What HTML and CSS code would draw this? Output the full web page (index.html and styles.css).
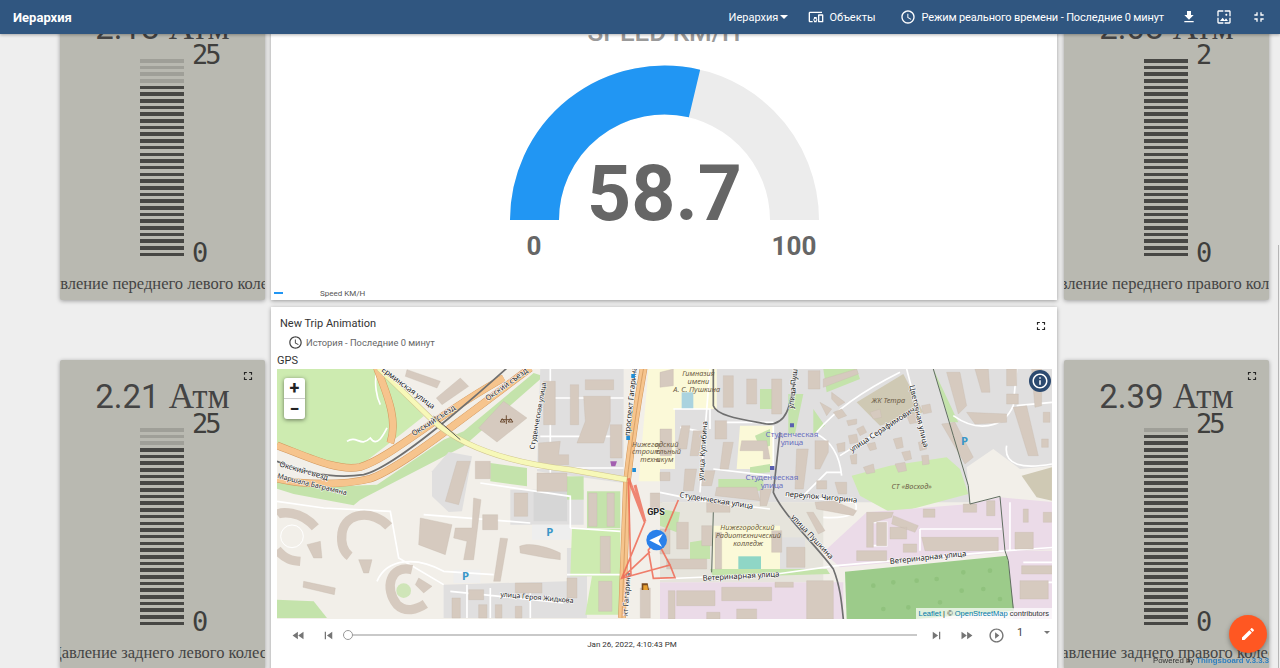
FILE: index.html
```html
<!DOCTYPE html>
<html lang="ru">
<head>
    <meta charset="UTF-8">
    <meta name="viewport" content="width=device-width, initial-scale=1.0">
    <title>Иерархия</title>
    <link rel="stylesheet" href="styles.css">
</head>
<body>
    <svg class="icon-defs" aria-hidden="true">
        <symbol id="i-clock" viewBox="0 0 24 24"><path d="M11.99 2C6.47 2 2 6.48 2 12s4.47 10 9.99 10C17.52 22 22 17.52 22 12S17.52 2 11.99 2zM12 20c-4.42 0-8-3.58-8-8s3.58-8 8-8 8 3.58 8 8-3.58 8-8 8zm.5-13H11v6l5.25 3.15.75-1.23-4.5-2.67z"/></symbol>
        <symbol id="i-fullscreen" viewBox="0 0 24 24"><path d="M7 14H5v5h5v-2H7v-3zm-2-4h2V7h3V5H5v5zm12 7h-3v2h5v-5h-2v3zM14 5v2h3v3h2V5h-5z"/></symbol>
    </svg>

    <header class="topbar">
        <div class="topbar-title">Иерархия</div>
        <div class="topbar-menu">Иерархия<span class="caret"></span></div>
        <div class="topbar-objects">
            <svg class="icon-16" viewBox="0 0 24 24"><path d="M3 6h18V4H3c-1.1 0-2 .9-2 2v12c0 1.1.9 2 2 2h4v-2H3V6zm10 6H9v1.78c-.61.55-1 1.33-1 2.22s.39 1.67 1 2.22V20h4v-1.78c.61-.55 1-1.34 1-2.22s-.39-1.67-1-2.22V12zm-2 5.5c-.83 0-1.5-.67-1.5-1.5s.67-1.5 1.5-1.5 1.5.67 1.5 1.5-.67 1.5-1.5 1.5zM22 8h-6c-.5 0-1 .5-1 1v10c0 .5.5 1 1 1h6c.5 0 1-.5 1-1V9c0-.5-.5-1-1-1zm-1 10h-4v-8h4v8z"/></svg>
            Объекты
        </div>
        <div class="topbar-time">
            <svg class="icon-16"><use href="#i-clock"/></svg>
            Режим реального времени - Последние 0 минут
        </div>
        <div class="topbar-btn"><svg class="icon-16" viewBox="0 0 24 24"><path d="M19 9h-4V3H9v6H5l7 7 7-7zM5 18v2h14v-2H5z"/></svg></div>
        <div class="topbar-btn"><svg class="icon-16" viewBox="0 0 24 24"><path d="M4 4h7V2H4c-1.1 0-2 .9-2 2v7h2V4zm6 9l-4 5h12l-3-4-2.03 2.71L10 13zm7-4.5c0-.83-.67-1.5-1.5-1.5S14 7.67 14 8.5s.67 1.5 1.5 1.5S17 9.33 17 8.5zM20 2h-7v2h7v7h2V4c0-1.1-.9-2-2-2zm0 18h-7v2h7c1.1 0 2-.9 2-2v-7h-2v7zM4 13H2v7c0 1.1.9 2 2 2h7v-2H4v-7z"/></svg></div>
        <div class="topbar-btn"><svg class="icon-16" viewBox="0 0 24 24"><path d="M5 16h3v3h2v-5H5v2zm3-8H5v2h5V5H8v3zm6 11h2v-3h3v-2h-5v5zm2-11V5h-2v5h5V8h-3z"/></svg></div>
    </header>

    <main class="dashboard">
        <!-- left column -->
        <div class="side-col">
            <section class="lcd">
                <svg class="lcd-expand"><use href="#i-fullscreen"/></svg>
                <div class="lcd-title">2.18 <span class="lcd-unit">Атм</span></div>
                <div class="lcd-body">
                    <div class="scale"><div class="scale-off" style="height: 26.7px"></div></div>
                    <div class="limits"><span>25</span><span>0</span></div>
                </div>
                <div class="lcd-label"><span>Давление переднего левого колеса</span></div>
            </section>
            <section class="lcd">
                <svg class="lcd-expand"><use href="#i-fullscreen"/></svg>
                <div class="lcd-title">2.21 <span class="lcd-unit">Атм</span></div>
                <div class="lcd-body">
                    <div class="scale"><div class="scale-off" style="height: 20px"></div></div>
                    <div class="limits"><span>25</span><span>0</span></div>
                </div>
                <div class="lcd-label"><span>Давление заднего левого колеса</span></div>
            </section>
        </div>

        <!-- middle column -->
        <div class="mid-col">
            <section class="card gauge-card">
                <div class="gauge-title">SPEED KM/H</div>
                <svg class="gauge" viewBox="0 0 786 224">
                    <path class="gauge-track" d="M263.5 174 A130 130 0 0 1 523.5 174"/>
                    <path class="gauge-value" d="M263.5 174 A130 130 0 0 1 423.5 47.5"/>
                    <text class="gauge-num" x="393.5" y="174">58.7</text>
                    <text class="gauge-limit" x="263" y="209">0</text>
                    <text class="gauge-limit" x="523" y="209">100</text>
                </svg>
                <div class="legend"><span class="legend-dash"></span>Speed KM/H</div>
            </section>

            <section class="card trip-card">
                <div class="trip-head">
                    <span>New Trip Animation</span>
                    <svg class="trip-expand"><use href="#i-fullscreen"/></svg>
                </div>
                <div class="trip-time"><svg class="trip-clock"><use href="#i-clock"/></svg>История - Последние 0 минут</div>
                <div class="trip-label">GPS</div>

                <div class="map">
                    <svg class="map-svg" viewBox="0 0 775 250" width="775" height="250">
                        <defs>
                            <path id="west-roads" d="M300 0C325 70 365 150 340 225M0 232C100 270 180 310 250 297C340 270 480 140 680 30M0 332C80 352 200 352 280 332C360 305 520 180 760 0M1100 0C1082 100 1060 250 1050 340L1035 750"/>
                            <path id="west-trunk" d="M305 0L470 160C560 240 700 285 880 305L1050 335"/>
                        </defs>
                        <rect width="775" height="250" fill="#f2efe9"/>

                        <!-- west half, 3 units to a pixel -->
                        <g transform="scale(.3333) translate(0 -3)">
                            <path class="m-grass" d="M0 0H310L440 145L370 200L260 285L150 295L0 228Z"/>
                            <path class="m-green" d="M0 322L130 357L300 350L500 215L560 190L770 15L800 25L560 235L250 395L230 412L50 378L0 362Z"/>
                            <path class="m-resi" d="M790 0H1040V345L780 310Z"/>
                            <path class="m-resi" d="M465 310L515 252L585 265L555 430L515 432L465 385Z"/>
                            <path class="m-resi" d="M700 365H920V470H700ZM870 540H930V750H500V650L870 640Z"/>
                            <path class="m-grass" d="M885 482H1030V740H925L945 625H880Z"/>
                            <path class="m-school" d="M1115 0H1170V340H1085Z"/>
                            <path class="m-green" d="M640 285L750 300V355L640 340Z"/>
                            <path class="m-green" d="M870 325H920V395H870Z"/>
                            <path class="m-green" d="M930 370H1030V480H930Z"/>
                            <path class="m-pave" d="M770 370H870V460H770Z"/>
                            <path class="m-park" d="M765 470H880V515H765ZM530 605H610V645H530Z"/>
                            <path class="m-green" d="M0 695L110 700L150 750H0Z"/>

                            <g class="m-roads">
                                <path d="M820 0V330M800 90H1040M790 205H1030M780 300H1040"/>
                                <path d="M610 345L880 385V480M440 440L700 460L760 465M880 480L1030 490M870 620H1030"/>
                                <path d="M0 400L140 420L340 430L365 570L500 650M300 640C330 570 420 565 500 610L650 620"/>
                                <path d="M520 670L860 705M570 650V750M640 660V750M760 670V750"/>
                                <path d="M300 0C290 50 300 90 310 110M210 220C240 200 250 240 280 210C300 240 320 200 330 180"/>
                            </g>

                            <path class="m-bld" d="M390 5L490 40L480 60L385 25ZM478 90L550 30L575 55L495 110ZM605 180L680 100L750 150L660 222ZM800 40H835V170H800ZM880 50H905V170H880ZM925 35H1010V65H925ZM920 85H1000V160L980 225H900L925 160Z"/>
                            <path class="m-bld" d="M785 225L850 220L845 260H875V290H785ZM1000 170H1035V270H1000ZM780 315H870V370H780ZM595 280H640V332H595ZM540 280L580 280L545 410L505 400Z"/>
                            <path class="m-bld" d="M430 450L525 470L505 560L425 530ZM535 480H585L590 390L612 395L590 575H560L570 520L530 510ZM617 440H662V485H617ZM670 510L692 512L670 640L650 640ZM728 535C760 520 820 540 850 555V575L810 570L730 555ZM712 375H752V445H712Z"/>
                            <path class="m-bld" d="M90 530L130 520L135 570L110 570ZM245 575H285L275 615H260ZM80 640L175 660L172 680L78 658ZM425 630L465 655L440 675L415 650ZM935 375H960V475H935ZM990 375H1012V475H990ZM970 505H1000V615H970ZM870 630H900V690H870Z"/>
                            <path class="m-bld" d="M575 665H620V695H575ZM715 645H795V675H715ZM965 640H1005V730H965ZM525 690H550V750H525ZM605 710H630V750H605ZM655 710H675V750H655ZM715 715H735V750H715ZM1090 660H1120V750H1090ZM1120 375H1155V430H1120Z"/>
                            <g class="m-arcs">
                                <path d="M115 478C70 425 10 432 0 440"/>
                                <path d="M335 475C290 425 205 430 195 495C190 535 205 555 218 565"/>
                                <path d="M405 605C340 590 320 660 360 710C385 735 420 725 445 708"/>
                                <path d="M0 545C25 575 45 578 70 580"/>
                            </g>
                            <circle cx="45" cy="505" r="34" fill="none" stroke="#fff" stroke-width="3"/>
                            <circle cx="380" cy="668" r="22" fill="#cfe5b8"/>

                            <!-- roads: casing first, fill on top -->
                            <use class="m-road-case" href="#west-roads"/>
                            <use class="m-road-fill" href="#west-roads"/>
                            <path class="m-rail" d="M0 280C100 322 180 332 260 320C340 300 500 170 690 0"/>
                            <use class="m-trunk-case" href="#west-trunk"/>
                            <use class="m-trunk" href="#west-trunk"/>
                            <path class="m-rail-thin" d="M470 145L550 215"/>
                            <path class="m-divider" d="M1100 0C1082 100 1060 250 1050 340L1035 750"/>

                            <g class="m-label">
                                <text transform="translate(312 8) rotate(37)">Ерминская улица</text>
                                <text transform="translate(410 205) rotate(-33)">Окский съезд</text>
                                <text transform="translate(632 100) rotate(-36)">Окский съезд</text>
                                <text transform="translate(6 295) rotate(16)">Окский съезд</text>
                                <text class="m-small" transform="translate(0 330) rotate(14)">Маршала Баграмяна</text>
                                <text class="m-small" transform="translate(772 245) rotate(-80)">Студенческая улица</text>
                                <text transform="translate(1058 205) rotate(-84)">проспект Гагарина</text>
                                <text transform="translate(1052 745) rotate(-86)">кт Гагарина</text>
                                <text class="m-small" transform="translate(670 686) rotate(5)">улица Героя Жидкова</text>
                            </g>
                            <g class="m-italic">
                                <text x="1065" y="236">Нижегород</text>
                                <text x="1065" y="258">строител</text>
                                <text x="1090" y="282">техни</text>
                            </g>
                            <text class="m-parking" x="808" y="505">P</text>
                            <text class="m-parking" x="555" y="637">P</text>
                            <path class="m-symbol" d="M672 155H705M688 142V168M676 152L670 162H684ZM700 152L694 162H708Z"/>
                            <path d="M1000 280H1020L1015 295H1003Z" fill="#a35fb0"/>
                            <path class="m-stop" d="M1063 18h11v12h-11zM1048 204h11v12h-11zM1066 300h11v12h-11z"/>
                        </g>

                        <!-- east half -->
                        <g transform="translate(383 0) scale(.3333)">
                            <path class="m-resi" d="M170 0H1185V400H0V120H170Z"/>
                            <path class="m-yard" d="M0 400H490V640H0Z"/>
                            <path class="m-land" d="M920 295L1000 240L1080 300L1176 290V400L930 400Z"/>
                            <path class="m-tan" d="M590 100L730 15L790 130L660 170Z"/>
                            <path class="m-tan" d="M1085 320L1176 295V395L1130 385Z"/>
                            <path class="m-grass" d="M575 320L690 290L860 265L900 300L925 375L700 435L600 380Z"/>
                            <path class="m-pink" d="M490 550L620 430L930 405L1020 385L1185 400V540L1050 548L540 595Z"/>
                            <path class="m-pink" d="M1040 545H1185V750H1060ZM0 640H550V750H0Z"/>
                            <path class="m-forest" d="M555 608L1042 560L1062 725L770 750H560Z"/>
                            <path class="m-trees" d="M640 650h.1M700 640h.1M770 635h.1M830 630h.1M910 610h.1M990 605h.1M670 720h.1M745 715h.1M840 700h.1M905 665h.1M970 660h.1M1020 690h.1"/>
                            <path class="m-school" d="M0 0H170V120H0ZM0 120H45V300H0ZM240 170H340V300H230ZM160 470H360V600H160Z"/>
                            <path class="m-resi" d="M360 505H435V600H360Z"/>
                            <path class="m-water" d="M65 70H100V120H65Z"/>
                            <path class="m-teal" d="M235 562H303V600H235Z"/>
                            <path class="m-green" d="M300 60H340V120H300ZM385 75H430L405 195H385ZM175 330H310V365H175ZM460 120L495 170L460 195ZM490 0H590L600 30L500 70ZM820 0L895 160L870 160ZM285 200L330 180V230L300 240ZM270 295L330 285V310L270 315ZM0 420L60 430L50 490L0 470ZM90 520L150 510L150 570H90ZM150 600H500L510 615L160 625Z"/>

                            <g class="m-roads">
                                <path d="M150 0L120 370M40 120H150V180M60 175L135 190M160 300L330 320M170 160H340M340 170V300"/>
                                <path d="M0 370L120 395L330 420M740 0L800 230M720 10C600 70 520 130 470 190M470 195C520 220 540 270 545 320M540 260L750 130M375 380L585 400C600 430 570 450 490 445"/>
                                <path d="M0 630L350 615L530 590L1040 545L1185 535M430 380L500 310L545 310M880 140C950 190 1030 180 1060 110L1070 0M1040 230C1030 290 1090 300 1176 285M1070 110L1176 100"/>
                                <path d="M780 480H1025M780 480V545M640 460H680V530H640M1050 400V545M1090 580H1185M1080 640H1185"/>
                            </g>

                            <path class="m-bld" d="M0 10L40 0V50L0 55ZM190 20H220V115H190ZM260 30H290V105H260ZM335 30H365V135H335ZM445 5H480V60H445ZM490 30L590 0L595 15L490 55ZM515 70L555 100L535 112L515 90ZM480 100L515 120L500 140ZM0 180H35V260H0ZM65 170H90L80 240H50ZM100 185H130L115 260H90ZM165 155H200V210H165ZM190 220H220L205 300H180Z"/>
                            <path class="m-bld" d="M245 215H320L330 270H310V245H240ZM465 215H505V250L480 300H465ZM410 240H445L430 360H405ZM0 310H30V335H0ZM75 300H110L100 365H70ZM130 305H165L155 350H125ZM300 360H335L320 410H300ZM170 355H290L300 395L165 380ZM140 395H210V430H140Z"/>
                            <path class="m-bld" d="M845 165L885 160L940 265L915 285ZM860 10H900L920 110L895 135ZM945 0H985L990 70L965 70ZM1040 0H1070V50H1040ZM1040 75H1075V105H1040ZM920 130L1040 135V160L945 165ZM1060 115L1100 110L1135 260H1105ZM1115 0H1145V110L1125 115Z"/>
                            <path class="m-bld" d="M1150 130H1170V160H1150ZM1145 210H1165V235H1145ZM520 130L545 120L560 140L535 150ZM560 155L590 150L590 165L565 170ZM590 180L610 170L620 190L600 200ZM630 130L660 120L665 145L640 150ZM740 140L770 130L775 160L750 165ZM785 110L810 105L815 130L790 135ZM700 210L725 205L730 235L710 240ZM725 250L750 245L755 270L735 275ZM775 220L795 215L800 240L780 245ZM785 260L805 258L808 285L788 288ZM705 285L735 280L740 305L715 310ZM610 295L640 285L645 310L620 315ZM620 225L645 220L650 240L630 245ZM565 200L590 195L595 220L570 225ZM530 225L555 220L555 245L535 250ZM570 260L590 255L590 285L575 285Z"/>
                            <path class="m-bld" d="M465 400L520 395L590 425L580 440L470 420ZM440 430L460 430L495 485L475 495ZM525 340H560L560 375L535 375ZM470 335H500V360H470ZM620 430H700L695 445L640 460V535H620ZM700 440L775 470L765 490L695 465ZM650 460H680V530H650ZM690 475H740V510H690ZM730 525H770V550H730ZM590 545H680V575H590ZM785 505H1015V545H795ZM910 405H950V430H910ZM980 395H1005V440H980ZM790 420H825V445H790Z"/>
                            <path class="m-bld" d="M380 535H435V595H380ZM440 635H520V750H440ZM50 665H165V710H50ZM185 655H335V695H185ZM345 640H400V655H345ZM165 490H185V600H165ZM335 485H365V550H335ZM50 460H85V540H50ZM0 480H30V555H0ZM125 470H155V530H125ZM20 570H140V600H20ZM1065 490H1120V540H1065ZM1085 590H1180V615H1085ZM1080 635H1165V690H1080ZM1090 420H1105V460H1090ZM1150 430H1175V460H1150ZM230 720H290V750H230ZM140 730H180V750H140ZM25 665H45V750H25Z"/>

                            <path class="m-rail" d="M160 0V110C170 140 240 150 320 165C380 170 390 120 410 0"/>
                            <path class="m-rail" d="M360 190L340 370C370 440 470 530 520 600C540 650 545 700 550 750"/>
                            <path class="m-fence" d="M820 0L880 200L925 350L930 405L1020 382L1035 545L1045 575L1060 720M155 610L160 430"/>

                            <g class="m-label">
                                <text transform="translate(375 382) rotate(5)">переулок Чигорина</text>
                                <text transform="translate(58 385) rotate(9)">Студенческая улица</text>
                                <text transform="translate(128 635) rotate(-3)">Ветеринарная улица</text>
                                <text transform="translate(690 585) rotate(-6)">Ветеринарная улица</text>
                                <text transform="translate(575 250) rotate(-33)">улица Серафимовича</text>
                                <text transform="translate(748 50) rotate(77)">Цветочная улица</text>
                                <text transform="translate(130 335) rotate(-86)">улица Кулибина</text>
                                <text transform="translate(400 120) rotate(-84)">улица Пушкина</text>
                                <text transform="translate(392 445) rotate(47)">улица Пушкина</text>
                            </g>
                            <g class="m-italic m-center">
                                <text x="115" y="22">Гимназия</text>
                                <text x="115" y="46">имени</text>
                                <text x="110" y="70">А. С. Пушкина</text>
                                <text x="685" y="102">ЖК Тетра</text>
                                <text x="755" y="360">СТ «Восход»</text>
                                <text x="262" y="484">Нижегородский</text>
                                <text x="265" y="508">Радиотехнический</text>
                                <text x="265" y="532">колледж</text>
                                <text x="20" y="234">одский</text>
                                <text x="25" y="256">ельный</text>
                                <text x="15" y="280">икум</text>
                            </g>
                            <g class="m-station">
                                <text x="396" y="205">Студенческая</text>
                                <text x="396" y="229">улица</text>
                                <text x="336" y="334">Студенческая</text>
                                <text x="336" y="358">улица</text>
                            </g>
                            <path class="m-stop2" d="M390 163h12v12h-12zM330 291h13v12h-13z"/>
                            <text class="m-parking" x="903" y="228">P</text>
                        </g>

                        <!-- track, drawn from the marker crop -->
                        <g transform="translate(283 111) scale(.3333)">
                            <path class="m-route-fat" d="M205 -5L255 125L225 15"/>
                            <path class="m-route" d="M255 125L185 295L330 255L345 293L280 295L265 210L290 180L330 255L275 270M185 295L270 215M315 155L355 60M205 5L213 285"/>
                            <path d="M245 310h18l4 20h-22z" fill="#7a4a1e"/>
                            <path d="M250 316h12l2 14h-14z" fill="#e8a030"/>
                            <text class="m-gps" x="288" y="105">GPS</text>
                            <circle cx="290" cy="180" r="31" fill="#2a80ea"/>
                            <path d="M268 181L308 162L296 182L306 200Z" fill="#fff"/>
                        </g>
                    </svg>

                    <div class="zoom-ctl"><span>+</span><span>−</span></div>
                    <div class="map-info"><svg viewBox="0 0 24 24"><path d="M11 17h2v-6h-2v6zm1-15C6.48 2 2 6.48 2 12s4.48 10 10 10 10-4.48 10-10S17.52 2 12 2zm0 18c-4.41 0-8-3.59-8-8s3.59-8 8-8 8 3.59 8 8-3.59 8-8 8zM11 9h2V7h-2v2z"/></svg></div>
                    <div class="attribution"><a>Leaflet</a> | © <a>OpenStreetMap</a> contributors</div>
                </div>

                <div class="player">
                    <div class="player-btn"><svg viewBox="0 0 24 24"><path d="M11 18V6l-8.5 6 8.5 6zm.5-6l8.5 6V6l-8.5 6z"/></svg></div>
                    <div class="player-btn"><svg viewBox="0 0 24 24"><path d="M6 6h2v12H6zm3.5 6l8.5 6V6z"/></svg></div>
                    <div class="slider">
                        <div class="slider-track"><span class="slider-thumb"></span></div>
                        <div class="slider-date">Jan 26, 2022, 4:10:43 PM</div>
                    </div>
                    <div class="player-btn"><svg viewBox="0 0 24 24"><path d="M6 18l8.5-6L6 6v12zM16 6v12h2V6h-2z"/></svg></div>
                    <div class="player-btn"><svg viewBox="0 0 24 24"><path d="M4 18l8.5-6L4 6v12zm9-12v12l8.5-6L13 6z"/></svg></div>
                    <div class="player-btn player-play"><svg viewBox="0 0 24 24"><path d="M10 16.5l6-4.5-6-4.5v9zM12 2C6.48 2 2 6.48 2 12s4.48 10 10 10 10-4.48 10-10S17.52 2 12 2zm0 18c-4.41 0-8-3.59-8-8s3.59-8 8-8 8 3.59 8 8-3.59 8-8 8z"/></svg></div>
                    <div class="speed"><span>1</span><span class="speed-arrow"></span></div>
                </div>
            </section>
        </div>

        <!-- right column -->
        <div class="side-col">
            <section class="lcd">
                <svg class="lcd-expand"><use href="#i-fullscreen"/></svg>
                <div class="lcd-title">2.08 <span class="lcd-unit">Атм</span></div>
                <div class="lcd-body">
                    <div class="scale"></div>
                    <div class="limits"><span>2</span><span>0</span></div>
                </div>
                <div class="lcd-label"><span>Давление переднего правого колеса</span></div>
            </section>
            <section class="lcd">
                <svg class="lcd-expand"><use href="#i-fullscreen"/></svg>
                <div class="lcd-title">2.39 <span class="lcd-unit">Атм</span></div>
                <div class="lcd-body">
                    <div class="scale"><div class="scale-off" style="height: 6.7px"></div></div>
                    <div class="limits"><span>25</span><span>0</span></div>
                </div>
                <div class="lcd-label"><span>Давление заднего правого колеса</span></div>
            </section>
        </div>
    </main>

    <div class="fab"><svg viewBox="0 0 24 24"><path d="M3 17.25V21h3.75L17.81 9.94l-3.75-3.75L3 17.25zM20.71 7.04c.39-.39.39-1.02 0-1.41l-2.34-2.34c-.39-.39-1.02-.39-1.41 0l-1.83 1.83 3.75 3.75 1.83-1.83z"/></svg></div>
    <div class="powered">Powered by <a>Thingsboard v.3.3.3</a></div>
    <div class="scroll-thumb"></div>
</body>
</html>
```

FILE: styles.css
```css
* {
    box-sizing: border-box;
}

html, body {
    margin: 0;
    height: 668px;
    overflow: hidden;
}

body {
    font-family: Roboto, "Noto Sans", sans-serif;
    background-color: #eeeeee;
    color: #333;
}

.icon-defs {
    display: none;
}

.icon-16 {
    width: 16px;
    height: 16px;
    fill: currentColor;
    flex: none;
}

/* top bar */
.topbar {
    position: relative;
    z-index: 2;
    display: flex;
    align-items: center;
    height: 34px;
    padding-right: 4px;
    background-color: #305680;
    color: #fff;
    font-size: 11px;
    box-shadow: 0 1px 3px rgba(0, 0, 0, 0.3);
}

.topbar-title {
    margin-left: 13px;
    margin-right: auto;
    font-size: 13px;
    font-weight: 700;
}

.caret {
    display: inline-block;
    margin-left: 2px;
    vertical-align: 2px;
    border-left: 4px solid transparent;
    border-right: 4px solid transparent;
    border-top: 4px solid #fff;
}

.topbar-objects, .topbar-time {
    display: flex;
    align-items: center;
    gap: 5px;
}

.topbar-objects {
    margin-left: 20px;
}

.topbar-time {
    margin-left: 25px;
    margin-right: 7px;
    letter-spacing: -0.14px;
}

.topbar-btn {
    display: flex;
    justify-content: center;
    width: 35px;
}

/* dashboard grid */
.dashboard {
    display: grid;
    grid-template-columns: 205px 787px 205px;
    column-gap: 6px;
    margin-top: -43px;
    padding-left: 60px;
}

.side-col {
    display: flex;
    flex-direction: column;
    gap: 60px;
}

.mid-col {
    display: flex;
    flex-direction: column;
    gap: 7px;
    margin-right: 1px;
}

.card {
    background: #fff;
    box-shadow: 0 1px 4px rgba(0, 0, 0, 0.35);
}

/* tyre pressure widgets */
.lcd {
    position: relative;
    height: 309px;
    padding-top: 17px;
    background-color: #b9b9b1;
    color: #444;
    border-radius: 2px;
    box-shadow: 0 1px 4px rgba(0, 0, 0, 0.35);
}

.lcd-expand {
    position: absolute;
    top: 9px;
    right: 10px;
    width: 14px;
    height: 14px;
    fill: #222;
}

.lcd-title {
    height: 40px;
    line-height: 40px;
    font-size: 33px;
    text-align: center;
    white-space: nowrap;
}

.lcd-unit {
    font-family: "Liberation Serif", serif;
    font-size: 35px;
    margin-left: 1px;
}

.lcd-body {
    display: flex;
    align-items: flex-start;
    height: 197px;
    margin-top: 11px;
    padding-left: 80px;
}

.scale {
    width: 44px;
    height: 197px;
    background: repeating-linear-gradient(#474744 0, #474744 3.6px, transparent 3.6px, transparent 6.68px);
}

.scale-off {
    background: repeating-linear-gradient(#9f9f98 0, #9f9f98 3.6px, #b9b9b1 3.6px, #b9b9b1 6.68px);
}

.limits {
    display: flex;
    flex-direction: column;
    justify-content: space-between;
    height: 222px;
    margin-top: -16px;
    margin-left: 8px;
    font-family: "DejaVu Sans Mono", monospace;
    font-size: 27px;
    line-height: 24px;
    letter-spacing: -3px;
    color: #3f3f3d;
}

.lcd-label {
    display: flex;
    justify-content: center;
    overflow: hidden;
    margin-top: 16px;
    height: 24px;
    line-height: 24px;
    font-family: "Liberation Serif", serif;
    font-size: 16.5px;
    white-space: nowrap;
}

.lcd-label span {
    flex: none;
}

/* speed gauge */
.gauge-card {
    display: flex;
    flex-direction: column;
    height: 309px;
    padding-top: 27px;
}

.gauge-title {
    height: 28px;
    line-height: 28px;
    font-size: 26px;
    font-weight: 500;
    color: #999;
    text-align: center;
}

.gauge {
    display: block;
    width: 786px;
    height: 224px;
}

.gauge-track, .gauge-value {
    fill: none;
    stroke-width: 49;
}

.gauge-track {
    stroke: #ececec;
}

.gauge-value {
    stroke: #2196f3;
}

.gauge-num {
    font-size: 77px;
    font-weight: 700;
    fill: #666;
    text-anchor: middle;
}

.gauge-limit {
    font-size: 26px;
    font-weight: 700;
    fill: #666;
    text-anchor: middle;
}

.legend {
    display: flex;
    align-items: center;
    margin-top: auto;
    height: 14px;
    padding-left: 3px;
    font-size: 8px;
    color: #555;
}

.legend-dash {
    width: 9px;
    height: 2px;
    margin-right: 37px;
    background-color: #2196f3;
}

/* trip animation */
.trip-card {
    padding-top: 9px;
    height: 380px;
}

.trip-head {
    display: flex;
    justify-content: space-between;
    align-items: center;
    height: 14px;
    padding-left: 9px;
    padding-right: 9px;
    font-size: 11px;
    color: #333;
}

.trip-expand {
    width: 14px;
    height: 14px;
    margin-top: 6px;
    fill: #222;
}

.trip-time {
    display: flex;
    align-items: center;
    gap: 3px;
    height: 14px;
    margin-top: 5px;
    padding-left: 17px;
    font-size: 9.3px;
    color: #666;
}

.trip-clock {
    width: 15px;
    height: 15px;
    fill: #444;
}

.trip-label {
    height: 14px;
    line-height: 14px;
    margin-top: 5px;
    padding-left: 6px;
    font-size: 11px;
}

.map {
    position: relative;
    width: 775px;
    height: 250px;
    margin-top: 1px;
    margin-left: 6px;
    overflow: hidden;
}

.map-svg {
    display: block;
}

.m-land { fill: #f2efe9; }
.m-yard { fill: #e6e4dc; }
.m-grass { fill: #cdebb0; }
.m-green { fill: #c4e3ab; }
.m-resi { fill: #e0dfdf; }
.m-pave { fill: #d6d6d6; }
.m-park { fill: #eeeeee; }
.m-school { fill: #fbf9d8; }
.m-tan { fill: #cfc9b4; }
.m-pink { fill: #ebdbe8; }
.m-forest { fill: #9ccb8a; }
.m-water { fill: #aad3df; }
.m-teal { fill: #8fd6c6; }
.m-bld { fill: #d6cabf; stroke: #c6b9ad; stroke-width: 1; }

.m-roads path, .m-arcs path, .m-road-case, .m-road-fill, .m-trunk, .m-trunk-case, .m-rail, .m-rail-thin, .m-divider, .m-fence, .m-route, .m-route-fat, .m-symbol, .m-trees {
    fill: none;
}

.m-roads path {
    stroke: #fff;
    stroke-width: 5;
}

.m-arcs path {
    stroke: #d6cabf;
    stroke-width: 28;
}

.m-road-case {
    stroke: #d2975c;
    stroke-width: 23;
}

.m-road-fill {
    stroke: #f6c48d;
    stroke-width: 20;
}

.m-trunk-case {
    stroke: #cfc48c;
    stroke-width: 17;
}

.m-trunk {
    stroke: #f7f8b8;
    stroke-width: 14;
}

.m-divider {
    stroke: #c98f55;
    stroke-width: 2;
}

.m-rail {
    stroke: #6f6f6f;
    stroke-width: 5;
}

.m-rail-thin {
    stroke: #555;
    stroke-width: 3;
}

.m-fence {
    stroke: #5f6d5f;
    stroke-width: 3;
}

.m-symbol {
    stroke: #6b4a30;
    stroke-width: 3;
}

.m-trees {
    stroke: #90c27d;
    stroke-width: 14;
    stroke-linecap: round;
}

.m-stop { fill: #1f8dd6; }
.m-stop2 { fill: #5a5fb0; }

.m-route {
    stroke: #ee6a55;
    stroke-width: 5;
    opacity: 0.85;
}

.m-route-fat {
    stroke: #ee6a55;
    stroke-width: 9;
    opacity: 0.8;
}

.m-label text {
    font-family: "Noto Sans", sans-serif;
    font-size: 23px;
    fill: #222;
    stroke: #fff;
    stroke-width: 3px;
    paint-order: stroke;
}

.m-label .m-small {
    font-size: 21px;
}

.m-italic text {
    font-family: "Noto Sans", sans-serif;
    font-style: italic;
    font-size: 22px;
    fill: #6b5b45;
}

.m-center text, .m-station text {
    text-anchor: middle;
}

.m-station text {
    font-family: "Noto Sans", sans-serif;
    font-size: 24px;
    fill: #6a6fc0;
}

.m-parking {
    font-family: "Noto Sans", sans-serif;
    font-size: 34px;
    font-weight: 700;
    fill: #3a96c8;
}

.m-gps {
    font-size: 27px;
    font-weight: 700;
    fill: #222;
    text-anchor: middle;
    stroke: #fff;
    stroke-width: 2px;
    paint-order: stroke;
}

.zoom-ctl {
    position: absolute;
    top: 9px;
    left: 7px;
    display: flex;
    flex-direction: column;
    width: 21px;
    background: #fff;
    border-radius: 3px;
    box-shadow: 0 1px 4px rgba(0, 0, 0, 0.5);
}

.zoom-ctl span {
    height: 20.5px;
    line-height: 20px;
    font-size: 18px;
    font-weight: 700;
    text-align: center;
    color: #222;
}

.zoom-ctl span:first-child {
    border-bottom: 1px solid #ccc;
}

.map-info {
    position: absolute;
    top: 1px;
    right: 1px;
    width: 22px;
    height: 22px;
    padding: 2px;
    border-radius: 50%;
    background-color: #2c4a70;
    fill: #fff;
}

.attribution {
    position: absolute;
    right: 0;
    bottom: 0;
    padding: 0 3px;
    height: 11px;
    line-height: 11px;
    background: rgba(255, 255, 255, 0.7);
    font-family: "Liberation Sans", sans-serif;
    font-size: 7.5px;
    color: #333;
}

.attribution a {
    color: #0078a8;
}

/* playback controls */
.player {
    display: flex;
    align-items: flex-start;
    padding-left: 12px;
    padding-right: 7px;
}

.player-btn {
    display: flex;
    justify-content: center;
    align-items: center;
    width: 30px;
    height: 32px;
    fill: #757575;
}

.player-btn svg {
    width: 15px;
    height: 15px;
}

.player-play svg {
    width: 17px;
    height: 17px;
}

.slider {
    flex: 1;
    padding-top: 15px;
}

.slider-track {
    position: relative;
    height: 2px;
    margin-right: 4px;
    background-color: #c9c9c9;
}

.slider-thumb {
    position: absolute;
    left: 0;
    top: -4px;
    width: 10px;
    height: 10px;
    border: 1px solid #999;
    border-radius: 50%;
    background: #fff;
}

.slider-date {
    margin-top: 3px;
    text-align: center;
    font-size: 8px;
    line-height: 12px;
    color: #333;
}

.speed {
    display: flex;
    justify-content: space-between;
    width: 33px;
    margin-left: 6px;
    padding-top: 7px;
    font-size: 11px;
    line-height: 14px;
    color: #444;
}

.speed-arrow {
    margin-top: 5px;
    border-left: 3px solid transparent;
    border-right: 3px solid transparent;
    border-top: 3px solid #777;
}

/* floating bits */
.fab {
    position: fixed;
    left: 1229px;
    top: 615px;
    display: flex;
    align-items: center;
    justify-content: center;
    width: 38px;
    height: 38px;
    border-radius: 50%;
    background-color: #ff5722;
    fill: #fff;
    box-shadow: 0 2px 5px rgba(0, 0, 0, 0.35);
    z-index: 3;
}

.fab svg {
    width: 16px;
    height: 16px;
}

.powered {
    position: fixed;
    right: 11px;
    top: 655px;
    font-family: "Liberation Sans", sans-serif;
    font-size: 7.8px;
    line-height: 12px;
    color: #333;
    z-index: 3;
}

.powered a {
    color: #2f7fc0;
    font-weight: 700;
}

.scroll-thumb {
    position: fixed;
    left: 1278px;
    top: 245px;
    width: 1px;
    height: 423px;
    background-color: #b5b5b5;
}
```
